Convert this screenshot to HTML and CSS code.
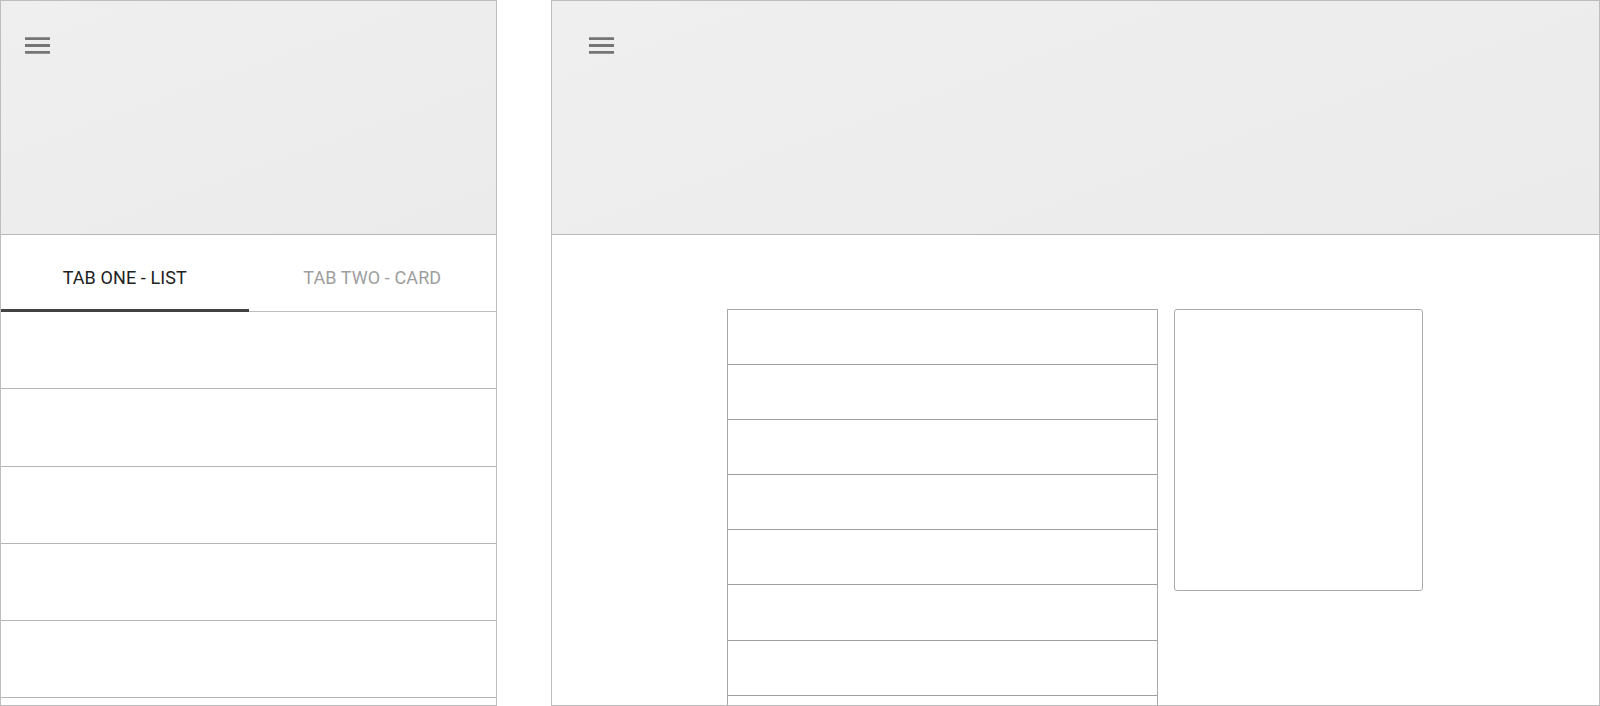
FILE: index.html
```html
<!DOCTYPE html>
<html>
    <head>
        <meta charset="UTF-8" />
        <title>tabs layout</title>
        <link rel="stylesheet" href="styles.css">
    </head>
    <body>
        <div class="screens">
            <!-- mobile -->
            <div class="panel mobile">
                <div class="header">
                    <svg class="menu" viewBox="3 6 18 12" width="25" height="17">
                        <path d="M3 6h18v2H3zM3 11h18v2H3zM3 16h18v2H3z" fill="#757575" />
                    </svg>
                </div>
                <div class="tabs">
                    <div class="tab active">TAB ONE - LIST</div>
                    <div class="tab">TAB TWO - CARD</div>
                </div>
                <div class="rows">
                    <div class="row"></div>
                    <div class="row"></div>
                    <div class="row"></div>
                    <div class="row"></div>
                    <div class="row"></div>
                </div>
            </div>

            <!-- desktop -->
            <div class="panel desktop">
                <div class="header wide">
                    <svg class="menu" viewBox="3 6 18 12" width="25" height="17">
                        <path d="M3 6h18v2H3zM3 11h18v2H3zM3 16h18v2H3z" fill="#757575" />
                    </svg>
                </div>
                <div class="content">
                    <div class="list">
                        <div class="item"></div>
                        <div class="item"></div>
                        <div class="item"></div>
                        <div class="item"></div>
                        <div class="item"></div>
                        <div class="item"></div>
                        <div class="item"></div>
                        <div class="item"></div>
                    </div>
                    <div class="card"></div>
                </div>
            </div>
        </div>
    </body>
</html>
```

FILE: styles.css
```css
body {
    margin: 0;
    background: #fff;
    font-family: Roboto, "Liberation Sans", sans-serif;
}
.screens {
    display: flex;
    gap: 54px;
    height: 706px;
}
.panel {
    box-sizing: border-box;
    height: 706px;
    border: 1px solid #bdbdbd;
    overflow: hidden;
    display: flex;
    flex-direction: column;
}
.mobile {
    width: 497px;
}
.desktop {
    flex: 1;
}
.header {
    box-sizing: border-box;
    height: 234px;
    flex-shrink: 0;
    background: linear-gradient(160deg, #efefef, #ebebeb);
    border-bottom: 1px solid #b8b8b8;
    padding: 36px 0 0 24px;
}
.header.wide {
    padding-left: 37px;
}
.menu {
    display: block;
}
.tabs {
    display: flex;
    box-sizing: border-box;
    height: 77px;
    flex-shrink: 0;
    border-bottom: 1px solid #bdbdbd;
}
.tab {
    flex: 1;
    box-sizing: border-box;
    height: 77px;
    margin-bottom: -1px;
    padding-top: 32px;
    text-align: center;
    font-size: 18px;
    letter-spacing: 0.1px;
    color: #9e9e9e;
    border-bottom: 3px solid transparent;
}
.tab.active {
    color: #212121;
    border-bottom-color: #424242;
}
.row {
    box-sizing: border-box;
    height: 77.25px;
    border-bottom: 1px solid #b5b5b5;
}
.content {
    display: flex;
    justify-content: center;
    align-items: flex-start;
    gap: 16px;
    padding: 74px 1px 0 0;
}
.list {
    box-sizing: border-box;
    width: 431px;
    flex-shrink: 0;
    border: 1px solid #a8a8a8;
    border-bottom: none;
}
.item {
    box-sizing: border-box;
    height: 55.1px;
    border-bottom: 1px solid #9e9e9e;
}
.card {
    box-sizing: border-box;
    width: 249px;
    height: 282px;
    flex-shrink: 0;
    border: 1px solid #aaaaaa;
    border-radius: 3px;
}
```
